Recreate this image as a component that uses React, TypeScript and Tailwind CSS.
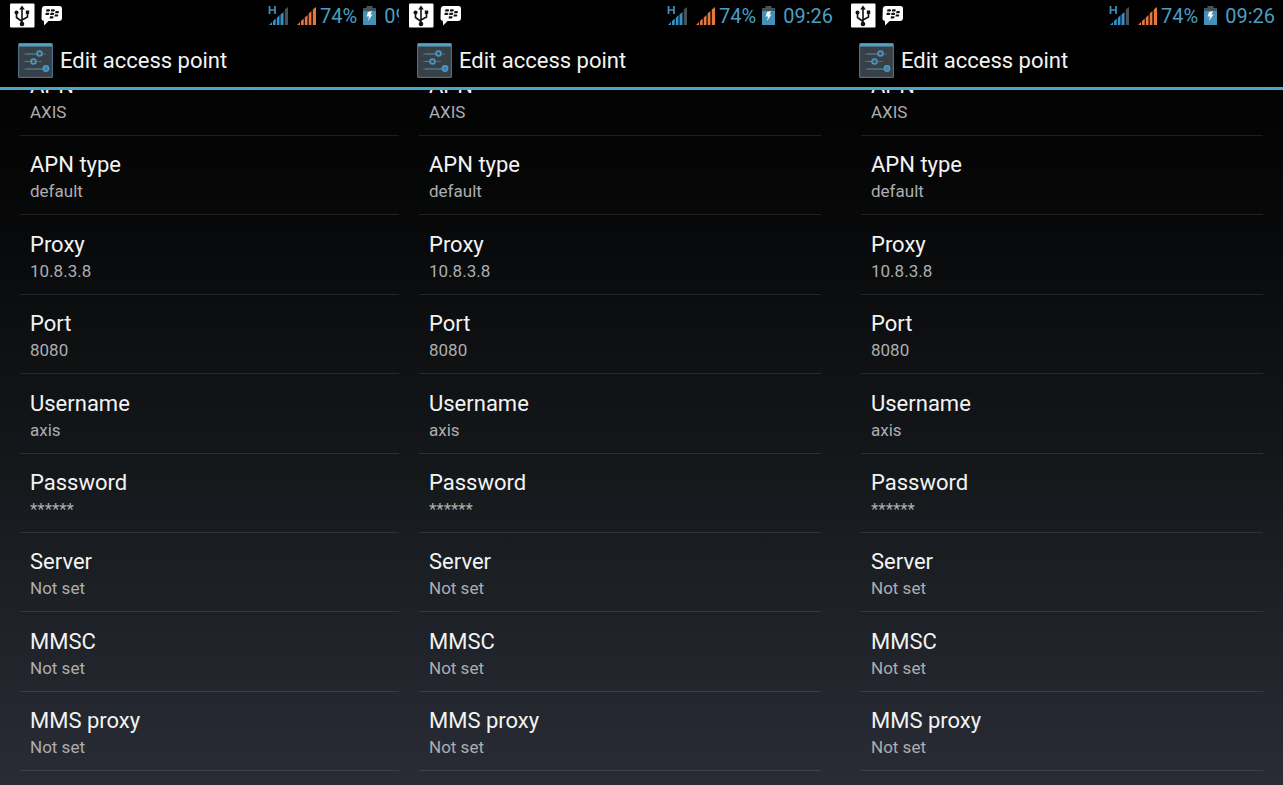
type Setting = {
  label: string;
  value: string;
};

const settings: Setting[] = [
  { label: "APN type", value: "default" },
  { label: "Proxy", value: "10.8.3.8" },
  { label: "Port", value: "8080" },
  { label: "Username", value: "axis" },
  { label: "Password", value: "******" },
  { label: "Server", value: "Not set" },
  { label: "MMSC", value: "Not set" },
  { label: "MMS proxy", value: "Not set" },
];

export default function App() {
  return (
    <main className="grid min-h-screen grid-cols-[399fr_442fr_442fr] bg-black font-[Roboto,'Noto_Sans',sans-serif] text-[#f3f3f3]">
      <Phone />
      <Phone />
      <Phone />
    </main>
  );
}

// The screen keeps its full width, so a narrower column crops its right side.
function Phone() {
  return (
    <section className="flex min-w-0 overflow-hidden">
      <div className="flex min-w-[442px] flex-1 flex-col">
        <StatusBar />
        <header className="flex h-[58px] items-center gap-[7px] border-b-3 border-[#4ba6c8] pt-[3px] pl-[18px]">
          <SettingsIcon />
          <h1 className="text-[22px] leading-7">Edit access point</h1>
        </header>
        <SettingsList />
      </div>
    </section>
  );
}

function StatusBar() {
  return (
    <div className="flex h-8 items-center justify-between pr-2 pl-[9px] text-xl text-[#4a9fc4]">
      <div className="flex items-center gap-1.5">
        <UsbIcon />
        <MessengerIcon />
      </div>
      <div className="flex items-center">
        <DataSignalIcon />
        <SignalIcon />
        <span className="mr-1.5 ml-1">74%</span>
        <BatteryIcon />
        <time className="ml-2">09:26</time>
      </div>
    </div>
  );
}

function SettingsList() {
  return (
    <ul className="flex flex-1 flex-col bg-linear-to-b from-[#030303] from-0% via-[#15181b] via-55% to-[#292c35] to-100% pb-3.5">
      {/* scrolled partly under the header */}
      <li className="mr-5 ml-5 flex h-[46px] flex-col justify-end overflow-hidden border-b border-white/10">
        <SettingButton label="APN" value="AXIS" />
      </li>
      {settings.map((setting) => (
        <li
          key={setting.label}
          className="mr-5 ml-5 flex min-h-[79px] flex-1 flex-col justify-end border-b border-white/10"
        >
          <SettingButton {...setting} />
        </li>
      ))}
    </ul>
  );
}

function SettingButton({ label, value }: Setting) {
  return (
    <button type="button" className="shrink-0 px-2.5 pb-[11px] text-left">
      <span className="block text-[22px] leading-7">{label}</span>
      <span className="block text-[17px] leading-6 text-[#adaeb0]">
        {value}
      </span>
    </button>
  );
}

function UsbIcon() {
  return (
    <svg width="26" height="26" viewBox="0 0 26 26" aria-hidden="true">
      <rect x="1" y="0.500" width="24.500" height="24" rx="1" fill="#fff" />
      <g stroke="#111" strokeWidth="1.600" fill="none">
        <path d="M13 6v15M13 18.500L7.500 14.500V10M13 17l5.500-3V9.500" />
      </g>
      <path d="M13 2.500l2.800 4h-5.600z" fill="#111" />
      <circle cx="13" cy="21" r="2.300" fill="#111" />
      <circle cx="7.500" cy="9.500" r="2" fill="#111" />
      <rect x="16.800" y="7.500" width="3.400" height="3.400" fill="#111" />
    </svg>
  );
}

function MessengerIcon() {
  return (
    <svg width="22" height="22" viewBox="0 0 22 22" aria-hidden="true">
      <path
        d="M3.500 1h15A2.500 2.500 0 0 1 21 3.500v9.500a3 3 0 0 1-3 3H7.500l-4.300 4.500-.4-4.800A2.200 2.200 0 0 1 .5 13.500L.8 3.500A2.700 2.700 0 0 1 3.500 1z"
        fill="#fff"
      />
      <path
        d="M5.500 4.200H8a1.100 1.100 0 0 1 0 2.200H5zM10.300 4.200h2.500a1.100 1.100 0 0 1 0 2.200h-3zM4.800 7.700h2.500a1.100 1.100 0 0 1 0 2.200h-3zM9.600 7.700h2.500a1.100 1.100 0 0 1 0 2.200h-3zM14.600 6h2.300a1.100 1.100 0 0 1 0 2.200h-2.800zM13.900 9.400h2.300a1.100 1.100 0 0 1 0 2.200h-2.800zM9 11.200h2.500a1.100 1.100 0 0 1 0 2.200h-3z"
        fill="#111"
      />
    </svg>
  );
}

function DataSignalIcon() {
  return (
    <svg
      className="mr-2"
      width="21"
      height="20"
      viewBox="0 0 21 20"
      aria-hidden="true"
    >
      <path
        d="M1.500 0v8M7 0v8M1.500 4H7"
        stroke="#3f93bd"
        strokeWidth="1.700"
        fill="none"
      />
      <path
        d="M1 19l3-3v3zM5 15l2.700-2.500V19H5zM8.800 12l2.700-3v10H8.800zM12.500 8.500L15.500 6v13h-3z"
        fill="#3391cb"
      />
      <path d="M16.800 3.500L20 1v18h-3.200z" fill="#4a5054" />
    </svg>
  );
}

function SignalIcon() {
  return (
    <svg width="19" height="20" viewBox="0 0 19 20" aria-hidden="true">
      <path
        d="M0 19l3-3v3zM4 15l2.700-2.500V19H4zM7.800 11.500L10.500 9v10H7.800zM11.700 7.500l2.700-2.500v14h-2.700zM15.800 3.500L19 1v18h-3.200z"
        fill="#e8753c"
      />
    </svg>
  );
}

function BatteryIcon() {
  return (
    <svg width="13" height="20" viewBox="0 0 13 20" aria-hidden="true">
      <path d="M3.500 0h6v2H13v4H0V2h3.500z" fill="#45545c" />
      <path d="M0 5h13v14H0z" fill="#4391b6" />
      <path d="M5 6l4-1-1.500 3.500h2L5 15l1-4.500H3.500z" fill="#f4fbff" />
    </svg>
  );
}

function SettingsIcon() {
  return (
    <svg width="35" height="36" viewBox="0 0 35 36" aria-hidden="true">
      <rect width="35" height="35" rx="1.500" fill="#477089" />
      <rect x="1.200" y="3" width="32.600" height="30.800" fill="#384047" />
      <path d="M1 0.500h33V3.500H1z" fill="#559fc2" />
      <path
        d="M6 11h22M6 18.500h18M6 26h24"
        stroke="#596670"
        strokeWidth="1.200"
      />
      <path d="M8 11h11M8 18.500h6M8 26h18" stroke="#4f7f9b" />
      <g fill="#36566b" stroke="#4f97c0" strokeWidth="1.500">
        <circle cx="21.500" cy="10.500" r="2.500" />
        <circle cx="15.500" cy="18.500" r="2.500" />
        <circle cx="28" cy="25.500" r="2.700" fill="#3a7fae" />
      </g>
    </svg>
  );
}
